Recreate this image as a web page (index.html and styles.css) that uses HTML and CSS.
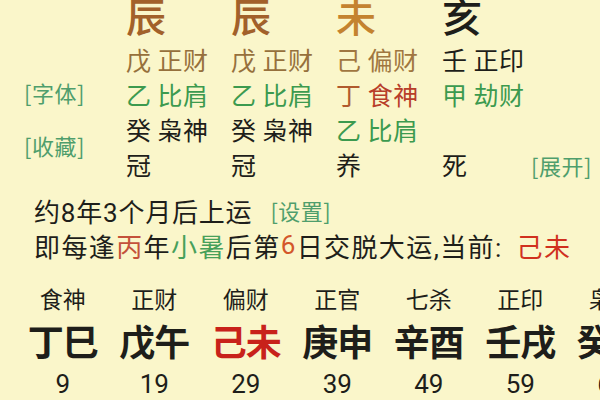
FILE: index.html
```html
<!DOCTYPE html>
<html lang="zh">
<head>
<meta charset="utf-8">
<link rel="stylesheet" href="styles.css">
</head>
<body>
<div class="page">
  <div class="chart">
    <div class="side"></div>
    <div class="cell big brown">辰</div>
    <div class="cell big brown">辰</div>
    <div class="cell big gold">未</div>
    <div class="cell big dark">亥</div>
    <div class="cell"></div>

    <div class="side"></div>
    <div class="cell row tan">戊 正财</div>
    <div class="cell row tan">戊 正财</div>
    <div class="cell row tan2">己 偏财</div>
    <div class="cell row dark">壬 正印</div>
    <div class="cell"></div>

    <div class="side link side-a">[字体]</div>
    <div class="cell row green">乙 比肩</div>
    <div class="cell row green">乙 比肩</div>
    <div class="cell row"><span class="rust">丁</span>&nbsp;<span class="red">食神</span></div>
    <div class="cell row green">甲 劫财</div>
    <div class="cell"></div>

    <div class="side link side-b">[收藏]</div>
    <div class="cell row dark">癸 枭神</div>
    <div class="cell row dark">癸 枭神</div>
    <div class="cell row green">乙 比肩</div>
    <div class="cell row"></div>
    <div class="cell"></div>

    <div class="cell row dark">冠</div>
    <div class="cell row dark">冠</div>
    <div class="cell row dark">养</div>
    <div class="cell row dark">死</div>
    <div class="cell link open">[展开]</div>
  </div>

  <div class="line1">约8年3个月后上运<span class="link set">[设置]</span></div>
  <div class="line2">即每逢<span class="c-bing">丙</span>年<span class="c-green">小暑</span>后第<span class="c-six">6</span>日交脱大运,当前: <span class="c-now">己未</span></div>

  <div class="dayun">
    <div class="lbl">食神</div>
    <div class="lbl">正财</div>
    <div class="lbl">偏财</div>
    <div class="lbl">正官</div>
    <div class="lbl">七杀</div>
    <div class="lbl">正印</div>
    <div class="lbl">枭神</div>

    <div class="gz">丁巳</div>
    <div class="gz">戊午</div>
    <div class="gz cur">己未</div>
    <div class="gz">庚申</div>
    <div class="gz">辛酉</div>
    <div class="gz">壬戌</div>
    <div class="gz">癸亥</div>

    <div class="age">9</div>
    <div class="age">19</div>
    <div class="age">29</div>
    <div class="age">39</div>
    <div class="age">49</div>
    <div class="age">59</div>
    <div class="age">69</div>
  </div>
</div>
</body>
</html>
```

FILE: styles.css
```css
html, body {
  margin: 0;
  padding: 0;
  background: #faf6ca;
  width: 600px;
  height: 400px;
  overflow: hidden;
}

.page {
  font-family: Roboto, "Noto Sans CJK SC", sans-serif;
  color: #1e1e1a;
  width: 600px;
  height: 400px;
  overflow: hidden;
}

.chart {
  display: grid;
  grid-template-columns: 126px 105px 105px 106px 89px 69px;
  grid-template-rows: 50px 35px 35px 35px 35px;
  margin-top: -8px;
}

.cell {
  display: flex;
  align-items: center;
  white-space: nowrap;
}

.big {
  font-family: "Noto Sans CJK SC", sans-serif;
  font-size: 40px;
  font-weight: 500;
  line-height: 1;
  padding-bottom: 4px;
}

.row {
  font-family: "Noto Sans CJK SC", sans-serif;
  font-size: 25px;
  line-height: 1;
  letter-spacing: 0.5px;
}

.side {
  padding-left: 24px;
  font-size: 22px;
  display: flex;
  align-items: center;
  white-space: nowrap;
}

.side-a {
  padding-bottom: 6px;
}

.side-b {
  grid-row: span 2;
  padding-bottom: 4px;
}

.open {
  font-size: 22px;
}

.link {
  color: #4f9e6c;
  font-family: "Noto Sans CJK SC", sans-serif;
  letter-spacing: 0.5px;
}

.brown { color: #a2612a; }
.gold { color: #c4832f; }
.dark { color: #1e1e1a; }
.tan { color: #96703c; }
.tan2 { color: #a07640; }
.green { color: #3c9a4f; }
.rust { color: #b05a2e; }
.red { color: #b83e2a; }

.line1 {
  height: 36px;
  margin-top: 10px;
  padding-left: 34px;
  display: flex;
  align-items: center;
  font-size: 26px;
  letter-spacing: 0.8px;
  white-space: nowrap;
}

.line1 .set {
  font-size: 22px;
  margin-left: 18px;
}

.line2 {
  height: 34px;
  padding-left: 34px;
  display: flex;
  align-items: center;
  font-size: 26px;
  letter-spacing: 1.4px;
  white-space: pre;
}

.c-bing { color: #c4513a; }
.c-green { color: #47a05a; }
.c-six { color: #d3572a; }
.c-now { color: #d0301e; margin-left: 6px; }

.dayun {
  display: grid;
  grid-template-columns: repeat(7, 91.5px);
  grid-template-rows: 36px 48px 40px;
  padding-left: 17px;
  margin-top: 18px;
}

.dayun > div {
  display: flex;
  align-items: center;
  justify-content: center;
  white-space: nowrap;
}

.lbl {
  font-family: "Noto Sans CJK SC", sans-serif;
  font-size: 23px;
}

.gz {
  font-family: "Noto Sans CJK SC", sans-serif;
  font-size: 36px;
  font-weight: 700;
  letter-spacing: -1px;
}

.gz.cur { color: #c8221a; }

.age {
  font-size: 26px;
}
```
